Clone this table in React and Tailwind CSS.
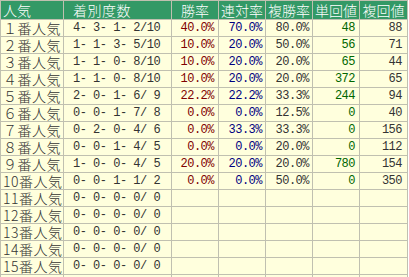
import React from "react";

const rows = [
  ["１番人気", "4- 3- 1- 2/10", "40.0%", "70.0%", "80.0%", "48", "88"],
  ["２番人気", "1- 1- 3- 5/10", "10.0%", "20.0%", "50.0%", "56", "71"],
  ["３番人気", "1- 1- 0- 8/10", "10.0%", "20.0%", "20.0%", "65", "44"],
  ["４番人気", "1- 1- 0- 8/10", "10.0%", "20.0%", "20.0%", "372", "65"],
  ["５番人気", "2- 0- 1- 6/ 9", "22.2%", "22.2%", "33.3%", "244", "94"],
  ["６番人気", "0- 0- 1- 7/ 8", "0.0%", "0.0%", "12.5%", "0", "40"],
  ["７番人気", "0- 2- 0- 4/ 6", "0.0%", "33.3%", "33.3%", "0", "156"],
  ["８番人気", "0- 0- 1- 4/ 5", "0.0%", "0.0%", "20.0%", "0", "112"],
  ["９番人気", "1- 0- 0- 4/ 5", "20.0%", "20.0%", "20.0%", "780", "154"],
  ["10番人気", "0- 0- 1- 1/ 2", "0.0%", "0.0%", "50.0%", "0", "350"],
  ["11番人気", "0- 0- 0- 0/ 0", "", "", "", "", ""],
  ["12番人気", "0- 0- 0- 0/ 0", "", "", "", "", ""],
  ["13番人気", "0- 0- 0- 0/ 0", "", "", "", "", ""],
  ["14番人気", "0- 0- 0- 0/ 0", "", "", "", "", ""],
  ["15番人気", "0- 0- 0- 0/ 0", "", "", "", "", ""],
  ["16番人気", "0- 0- 0- 0/ 0", "", "", "", "", ""],
];

const td = "border border-[#c0c0b0] p-0";
const mono =
  "text-[12px] tracking-[-0.5px] font-['Liberation_Mono',monospace] whitespace-pre";

export default function App() {
  return (
    <div className="w-[409px] h-[277px] overflow-hidden bg-white">
      <table className="border-collapse table-fixed w-[408px] bg-[#ffffdd] font-['Noto_Sans_CJK_JP',sans-serif] font-light">
        <colgroup>
          <col className="w-[63px]" />
          <col className="w-[108px]" />
          <col className="w-[47px]" />
          <col className="w-[47px]" />
          <col className="w-[47px]" />
          <col className="w-[47px]" />
          <col className="w-[48px]" />
        </colgroup>
        <thead>
          <tr className="h-[19px] bg-[#339966] text-white text-[14px] leading-[15px]">
            <th className={`${td} pl-[2px] text-left font-light`}>人気</th>
            <th className={`${td} pl-[9px] text-left font-light tracking-[0.5px]`}>着別度数</th>
            <th className={`${td} text-center font-light`}>勝率</th>
            <th className={`${td} text-center font-light`}>連対率</th>
            <th className={`${td} text-center font-light`}>複勝率</th>
            <th className={`${td} text-center font-light`}>単回値</th>
            <th className={`${td} text-center font-light`}>複回値</th>
          </tr>
        </thead>
        <tbody>
          {rows.map((r, i) => (
            <tr key={i} className="h-[17px] leading-[15px]">
              <td className={`${td} pl-[2px] text-left text-[14px] tracking-[0.5px] text-[#333] whitespace-nowrap`}>
                {r[0]}
              </td>
              <td className={`${td} pl-[9px] text-left ${mono} text-[#333]`}>{r[1]}</td>
              <td className={`${td} pr-[4px] text-right ${mono} text-[#800000]`}>{r[2]}</td>
              <td className={`${td} pr-[3px] text-right ${mono} text-[#000080]`}>{r[3]}</td>
              <td className={`${td} pr-[3px] text-right ${mono} text-[#333]`}>{r[4]}</td>
              <td className={`${td} pr-[4px] text-right ${mono} text-[#006600]`}>{r[5]}</td>
              <td className={`${td} pr-[5px] text-right ${mono} text-[#333]`}>{r[6]}</td>
            </tr>
          ))}
        </tbody>
      </table>
    </div>
  );
}
